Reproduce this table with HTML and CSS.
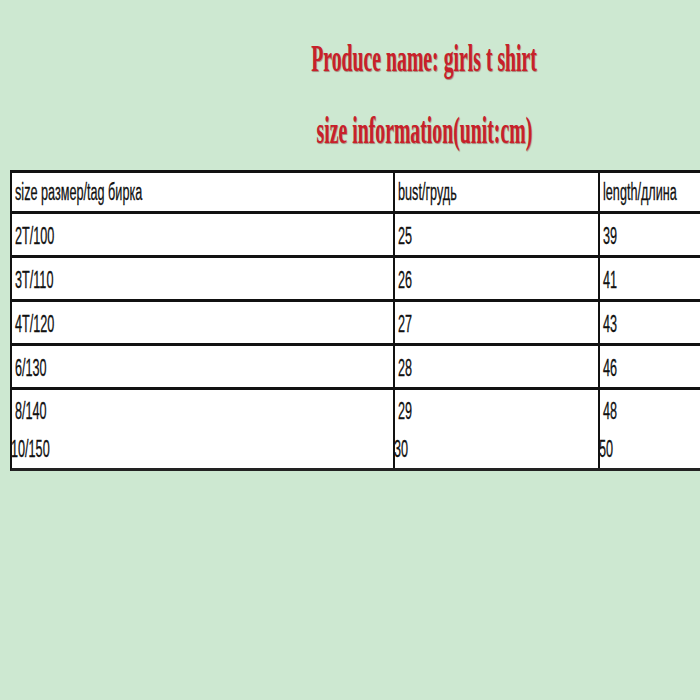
FILE: index.html
```html
<!DOCTYPE html>
<html>
<head>
<meta charset="utf-8">
<link rel="stylesheet" href="styles.css">
</head>
<body>
<div class="page">
  <div class="titles">
    <div class="title t1"><span>Produce name: girls t shirt</span></div>
    <div class="title t2"><span>size information(unit:cm)</span></div>
  </div>
  <div class="table">
    <div class="row head">
      <div class="cell"><span>size размер/tag бирка</span></div>
      <div class="cell"><span>bust/грудь</span></div>
      <div class="cell"><span>length/длина</span></div>
    </div>
    <div class="row">
      <div class="cell"><span>2T/100</span></div>
      <div class="cell"><span>25</span></div>
      <div class="cell"><span>39</span></div>
    </div>
    <div class="row">
      <div class="cell"><span>3T/110</span></div>
      <div class="cell"><span>26</span></div>
      <div class="cell"><span>41</span></div>
    </div>
    <div class="row">
      <div class="cell"><span>4T/120</span></div>
      <div class="cell"><span>27</span></div>
      <div class="cell"><span>43</span></div>
    </div>
    <div class="row">
      <div class="cell"><span>6/130</span></div>
      <div class="cell"><span>28</span></div>
      <div class="cell"><span>46</span></div>
    </div>
    <div class="row last">
      <div class="cell stack"><span>8/140</span><span class="shift">10/150</span></div>
      <div class="cell stack"><span>29</span><span class="shift">30</span></div>
      <div class="cell stack"><span>48</span><span class="shift">50</span></div>
    </div>
  </div>
</div>
</body>
</html>
```

FILE: styles.css
```css
html, body {
  margin: 0;
  padding: 0;
  background: #cde8d1;
  overflow: hidden;
}
.page {
  width: 700px;
  height: 700px;
  overflow: hidden;
  padding-top: 36px;
  box-sizing: border-box;
}
.titles {
  display: flex;
  flex-direction: column;
  align-items: center;
  padding-left: 148px;
  gap: 28px;
}
.title {
  font-family: "Liberation Serif", serif;
  font-weight: bold;
  font-size: 38px;
  line-height: 44px;
  color: #c8202a;
  text-shadow: 1px 1px 1px rgba(120, 20, 20, 0.45);
  white-space: nowrap;
}
.title span {
  display: inline-block;
  transform: scaleX(0.52);
}
.table {
  margin-top: 18px;
  margin-left: 10px;
  width: 720px;
  background: #fff;
  border-left: 2px solid #111;
  border-bottom: 3px solid #222;
  font-family: "Liberation Sans", sans-serif;
  font-size: 23px;
  color: #111;
}
.row {
  display: grid;
  grid-template-columns: 381px 205px 1fr;
  border-top: 3px solid #111;
  height: 41px;
}
.row.head { height: 38px; }
.row.last { height: 78px; }
.cell {
  display: flex;
  align-items: center;
  padding-left: 3px;
  padding-top: 3px;
  white-space: nowrap;
}
.cell + .cell {
  border-left: 2px solid #111;
}
.cell span {
  display: inline-block;
  transform: scaleX(0.55);
  transform-origin: left center;
  -webkit-text-stroke: 0.3px #111;
}
.row.head .cell { padding-top: 1px; }
.cell.stack {
  flex-direction: column;
  align-items: flex-start;
  justify-content: space-between;
  padding-top: 8px;
  padding-bottom: 5px;
}
.cell .shift {
  margin-left: -4px;
}
```
